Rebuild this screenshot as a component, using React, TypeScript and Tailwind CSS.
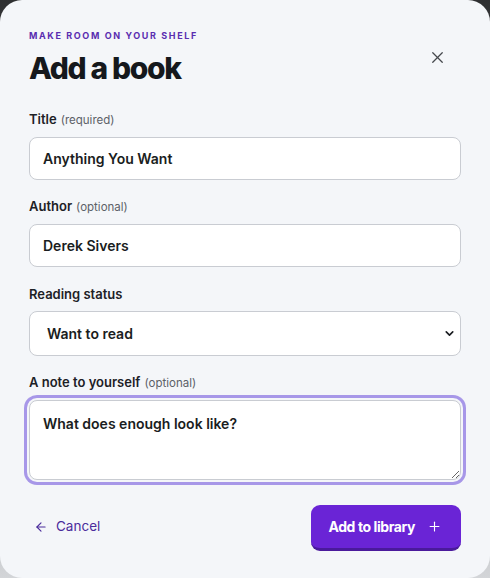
import { ArrowLeft, ChevronDown, Plus, X } from "lucide-react";

const font = { fontFamily: "Inter, 'Noto Sans', sans-serif" };

const Label = ({ text, hint }: { text: string; hint?: string }) => (
  <label className="mb-2 block text-[13px] leading-[18px] font-semibold text-[#1d2126]">
    {text}
    {hint && <span className="ml-1 text-[11.5px] font-normal text-[#5c6168]">({hint})</span>}
  </label>
);

const inputCls =
  "block w-full h-[43px] rounded-[8px] border border-[#c9ccd2] bg-white px-[13px] text-[14px] font-semibold text-[#1a1d21] outline-none";

export default function App() {
  return (
    <div className="h-[578px] w-[490px] bg-gradient-to-b from-[#2e2f31] to-[#d3d5d8]" style={font}>
      <div className="flex h-full flex-col rounded-[22px] bg-[#f4f6f9] px-[29px] pt-[30px]">
        <div className="flex items-start justify-between">
          <div>
            <p className="text-[9px] leading-[12px] font-bold tracking-[0.18em] text-[#5a2db0]">
              MAKE ROOM ON YOUR SHELF
            </p>
            <h1 className="mt-[8px] text-[30px] leading-[36px] font-extrabold tracking-[-0.045em] text-[#15181c]">
              Add a book
            </h1>
          </div>
          <button className="mr-[14px] mt-[18px] text-[#45484d]">
            <X size={19} strokeWidth={1.6} />
          </button>
        </div>

        <div className="mt-[24px]">
          <Label text="Title" hint="required" />
          <input className={inputCls} defaultValue="Anything You Want" />
        </div>

        <div className="mt-[17px]">
          <Label text="Author" hint="optional" />
          <input className={inputCls} defaultValue="Derek Sivers" />
        </div>

        <div className="mt-[18px]">
          <Label text="Reading status" />
          <div className="relative">
            <select
              className="block h-[45px] w-full appearance-none rounded-[8px] border border-[#c9ccd2] bg-white pl-[17px] text-[14px] font-semibold text-[#1a1d21] outline-none"
              defaultValue="want"
            >
              <option value="want">Want to read</option>
              <option value="reading">Reading</option>
              <option value="read">Read</option>
            </select>
            <ChevronDown
              size={13}
              strokeWidth={3}
              className="pointer-events-none absolute right-[5px] top-[16px] text-[#1a1d21]"
            />
          </div>
        </div>

        <div className="mt-[17px]">
          <Label text="A note to yourself" hint="optional" />
          <textarea
            className="block h-[80px] w-full rounded-[8px] border border-[#c9ccd2] bg-white px-[13px] py-[12px] text-[14px] font-semibold text-[#1a1d21] outline-none ring-[3px] ring-[#a797e8] ring-offset-2 ring-offset-[#f4f6f9]"
            defaultValue="What does enough look like?"
          />
        </div>

        <div className="mt-[25px] flex items-center justify-between">
          <button className="ml-[5px] -mt-[3px] flex items-center gap-[8px] text-[13.5px] text-[#4b2c9c]">
            <ArrowLeft size={14} strokeWidth={2} />
            Cancel
          </button>
          <button className="flex h-[46px] items-center gap-[12px] rounded-[9px] border-b-[3px] border-[#4a1a9c] bg-[#6a24d6] pl-[17px] pr-[19px] text-[14px] font-bold tracking-[-0.03em] text-white">
            Add to library
            <Plus size={15} strokeWidth={1.8} />
          </button>
        </div>
      </div>
    </div>
  );
}
